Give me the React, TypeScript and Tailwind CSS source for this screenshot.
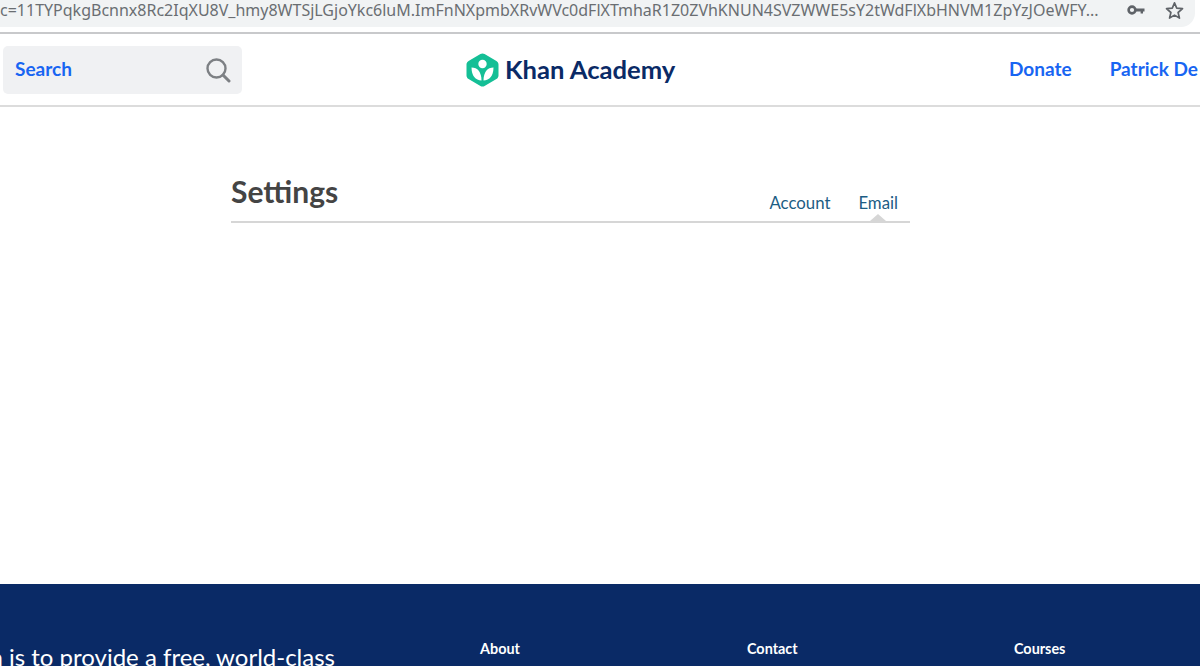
const lato = { fontFamily: "Lato, sans-serif" };

function KeyIcon() {
  return (
    <svg width="18" height="10" viewBox="0 0 18 10" fill="none">
      <circle cx="5" cy="5" r="3.4" stroke="#5f6368" strokeWidth="2.6" />
      <path d="M8.5 3.6H17.5V6.4H16V8.4H13.6V6.4H8.5Z" fill="#5f6368" />
    </svg>
  );
}

function StarIcon() {
  return (
    <svg width="19" height="19" viewBox="0 0 18 18" fill="none">
      <path
        d="M9 1.8L11.1 6.8L16.6 7.3L12.4 10.9L13.7 16.2L9 13.4L4.3 16.2L5.6 10.9L1.4 7.3L6.9 6.8Z"
        stroke="#5f6368"
        strokeWidth="1.6"
        strokeLinejoin="round"
      />
    </svg>
  );
}

function SearchIcon() {
  return (
    <svg width="26" height="26" viewBox="0 0 26 26" fill="none">
      <circle cx="11.5" cy="11.5" r="9" stroke="#7d8084" strokeWidth="2.4" />
      <path d="M18 18L24 24" stroke="#7d8084" strokeWidth="3" strokeLinecap="round" />
    </svg>
  );
}

function Logo() {
  return (
    <svg width="33" height="34" viewBox="0 0 33 34">
      <path
        d="M14.4 1.1C15.7 0.4 17.3 0.4 18.6 1.1L30.4 7.9C31.7 8.6 32.5 10 32.5 11.5V22.5C32.5 24 31.7 25.4 30.4 26.1L18.6 32.9C17.3 33.6 15.7 33.6 14.4 32.9L2.6 26.1C1.3 25.4 0.5 24 0.5 22.5V11.5C0.5 10 1.3 8.6 2.6 7.9Z"
        fill="#14bf96"
      />
      <circle cx="16.5" cy="11" r="4.2" fill="#ffffff" />
      <path d="M5.5 14.5C11.5 14.5 15.5 19 15.5 27.5C9.5 27.5 5.5 22.5 5.5 14.5Z" fill="#ffffff" />
      <path d="M27.5 14.5C21.5 14.5 17.5 19 17.5 27.5C23.5 27.5 27.5 22.5 27.5 14.5Z" fill="#ffffff" />
    </svg>
  );
}

function BrowserBar() {
  return (
    <div className="h-[34px] shrink-0 border-b-2 border-[#c8c9cb] bg-white">
      <div className="mr-[5px] flex h-[27px] items-center justify-between rounded-br-[14px] bg-[#f1f3f4] pb-[7px]">
        <span
          className="whitespace-nowrap text-[16px] leading-[20px] text-[#6a6e72]"
          style={{ fontFamily: "'Noto Sans', sans-serif" }}
        >
          c=11TYPqkgBcnnx8Rc2IqXU8V_hmy8WTSjLGjoYkc6luM.ImFnNXpmbXRvWVc0dFlXTmhaR1Z0ZVhKNUN4SVZWWE5sY2tWdFlXbHNVM1ZpYzJOeWFY...
        </span>
        <div className="flex items-center gap-[20px] pr-[11px]">
          <KeyIcon />
          <StarIcon />
        </div>
      </div>
    </div>
  );
}

function Header() {
  return (
    <header
      className="flex h-[73px] shrink-0 items-center border-b-2 border-[#dcdcdc] pl-[3px]"
      style={lato}
    >
      <div className="flex h-[48px] w-[239px] items-center justify-between rounded-[5px] bg-[#f0f1f3] pl-3 pr-[11px]">
        <span className="mb-[1px] text-[19px] font-bold text-[#1865f2]">Search</span>
        <SearchIcon />
      </div>
      <div className="ml-[224px] flex items-center gap-[6px]">
        <Logo />
        <span className="text-[25.6px] font-bold leading-none text-[#0a2a66]">Khan Academy</span>
      </div>
      <nav className="mb-[1px] ml-auto flex items-center gap-[38px] overflow-hidden whitespace-nowrap pr-[2px] text-[19px] font-bold text-[#1865f2]">
        <span>Donate</span>
        <span>Patrick De</span>
      </nav>
    </header>
  );
}

function Settings() {
  return (
    <main className="flex-1" style={lato}>
      <div className="ml-[231px] mt-[67px] flex h-[49px] w-[679px] items-end justify-between border-b-2 border-[#d6d6d6]">
        <h1 className="mb-[11px] text-[30px] font-bold leading-[38px] text-[#444444]">Settings</h1>
        <div className="mb-[7px] flex gap-[28px] pr-[12px] text-[16.8px] leading-[22px] text-[#1c5d84]">
          <span>Account</span>
          <span className="relative">
            Email
            <span className="absolute left-[12px] top-[22px] h-0 w-0 border-x-[8px] border-b-[7px] border-x-transparent border-b-[#d6d6d6]" />
          </span>
        </div>
      </div>
    </main>
  );
}

function Footer() {
  return (
    <footer className="h-[82px] shrink-0 overflow-hidden bg-[#0a2a66] text-white" style={lato}>
      <div className="flex items-start pt-[55px]">
        <div className="flex w-[335px] shrink-0 justify-end overflow-hidden whitespace-nowrap pt-[3px] text-[24px] leading-[30px]">
          Our mission is to provide a free, world-class
        </div>
        <div className="ml-[145px] w-[267px] text-[14.4px] font-bold leading-[20px]">About</div>
        <div className="w-[267px] text-[14.4px] font-bold leading-[20px]">Contact</div>
        <div className="text-[14.4px] font-bold leading-[20px]">Courses</div>
      </div>
    </footer>
  );
}

export default function App() {
  return (
    <div className="flex h-[666px] w-[1200px] flex-col overflow-hidden bg-white">
      <BrowserBar />
      <Header />
      <Settings />
      <Footer />
    </div>
  );
}
